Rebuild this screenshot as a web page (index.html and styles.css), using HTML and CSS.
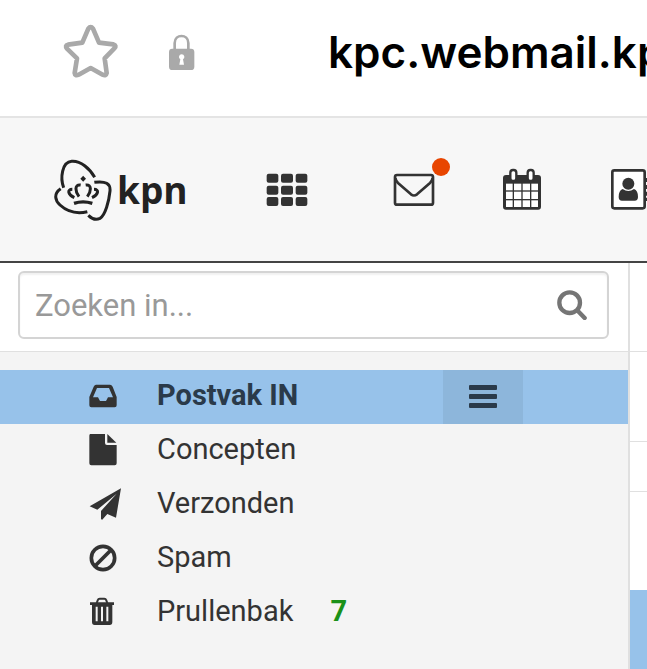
FILE: index.html
```html
<!DOCTYPE html>
<html lang="nl">
<head>
  <meta charset="UTF-8" />
  <meta name="viewport" content="width=device-width, initial-scale=1" />
  <title>KPN Webmail</title>
  <link rel="stylesheet" href="styles.css">
</head>
<body>
  <div class="address-bar">
    <button class="icon-btn star" aria-label="Favoriet">
      <svg width="56" height="56" viewBox="69 42 168 168" fill="none" stroke="#a9a9a9" stroke-width="14" stroke-linejoin="round">
        <path d="M145 56 Q152 47 159 56 L177 98 L220 103 Q231 107 223 115 L194 145 L200 189 Q198 199 188 194 L152 174 L116 194 Q105 199 104 189 L111 145 L81 116 Q74 106 84 104 L127 98 Z" />
      </svg>
    </button>
    <svg class="lock" width="28" height="37" viewBox="384 69 84 111">
      <path d="M404 118 V96 C404 68 445 68 445 96 V118" fill="none" stroke="#a9a9a9" stroke-width="8" />
      <rect x="387" y="113" width="76" height="64" rx="10" fill="#a9a9a9" />
      <path d="M425 130 a8 8 0 0 1 4 15 L432 161 H418 L421 145 a8 8 0 0 1 4 -15 Z" fill="#fff" />
    </svg>
    <span class="url">kpc.webmail.kp</span>
  </div>

  <header class="app-bar">
    <a class="logo" href="#">
      <svg width="60" height="64" viewBox="39 36 180 192" fill="none" stroke="#222" stroke-width="9">
        <path d="M71 125 C60 96 66 48 95 46 C122 44 149 67 164 94" />
        <path d="M163 109 C197 104 212 113 210 135 C207 165 196 208 180 217 C168 223 154 217 145 208" />
        <path d="M62 128 C40 143 45 163 60 177 C82 197 112 204 142 197" />
        <path d="M102 172 Q129 163 157 172" stroke-width="10" />
        <g stroke-width="9">
          <path d="M97 130 C80 130 84 146 103 155" />
          <path d="M162 130 C179 130 175 146 156 155" />
          <path d="M122 117 C102 114 106 138 117 152" />
          <path d="M137 117 C157 114 153 138 142 152" />
        </g>
        <path d="M129.500 89 L138 98 L129.500 107 L121 98 Z" fill="#222" stroke="none" />
      </svg>
      <span class="logo-text">kpn</span>
    </a>
    <button class="icon-btn apps" aria-label="Apps">
      <svg width="42" height="34" viewBox="48 86 126 102" fill="#333">
        <rect x="50" y="88" width="35" height="27" rx="6" />
        <rect x="93" y="88" width="36" height="27" rx="6" />
        <rect x="137" y="88" width="35" height="27" rx="6" />
        <rect x="50" y="124" width="35" height="27" rx="6" />
        <rect x="93" y="124" width="36" height="27" rx="6" />
        <rect x="137" y="124" width="35" height="27" rx="6" />
        <rect x="50" y="158" width="35" height="27" rx="6" />
        <rect x="93" y="158" width="36" height="27" rx="6" />
        <rect x="137" y="158" width="35" height="27" rx="6" />
      </svg>
    </button>
    <button class="icon-btn mail" aria-label="E-mail">
      <svg width="42" height="34" viewBox="430 83 126 102" fill="none" stroke="#333" stroke-width="8" stroke-linejoin="round">
        <rect x="436" y="89" width="114" height="89" rx="6" />
        <path d="M437 98 Q438 106 445 113 L484 147 Q493 154 502 147 L541 113 Q548 106 549 98" />
      </svg>
      <span class="badge"></span>
    </button>
    <button class="icon-btn calendar" aria-label="Agenda">
      <svg width="40" height="43" viewBox="66 70 120 129">
        <rect x="69" y="91" width="114" height="104" rx="9" fill="#333" />
        <g fill="#fff">
          <rect x="78" y="117" width="20" height="20" />
          <rect x="102" y="117" width="22" height="20" />
          <rect x="128" y="117" width="22" height="20" />
          <rect x="154" y="117" width="20" height="20" />
          <rect x="78" y="141" width="20" height="22" />
          <rect x="102" y="141" width="22" height="22" />
          <rect x="128" y="141" width="22" height="22" />
          <rect x="154" y="141" width="20" height="22" />
          <rect x="78" y="167" width="20" height="20" />
          <rect x="102" y="167" width="22" height="20" />
          <rect x="128" y="167" width="22" height="20" />
          <rect x="154" y="167" width="20" height="20" />
        </g>
        <g fill="#fff" stroke="#333" stroke-width="7">
          <rect x="91" y="76" width="18" height="33" rx="8" />
          <rect x="143" y="76" width="18" height="33" rx="8" />
        </g>
      </svg>
    </button>
    <button class="icon-btn contacts" aria-label="Contacten">
      <svg width="43" height="43" viewBox="390 70 129 129">
        <path d="M495 100 h14 v12 h-14 M495 121 h14 v12 h-14 M495 141 h14 v12 h-14 M495 159 h14 v10 h-14" fill="#333" />
        <rect x="397" y="77" width="97" height="114" rx="6" fill="#fff" stroke="#333" stroke-width="8" />
        <circle cx="445" cy="117" r="18" fill="#333" />
        <path d="M428 133 Q445 145 462 133 Q474 137 474 157 Q474 168 464 168 H426 Q416 168 416 157 Q416 137 428 133 Z" fill="#333" />
      </svg>
    </button>
  </header>

  <main class="content">
    <aside class="sidebar">
      <form class="search">
        <div class="search-box">
          <input type="text" placeholder="Zoeken in..." aria-label="Zoeken in" />
          <button class="icon-btn" type="button" aria-label="Zoeken">
            <svg width="30" height="30" viewBox="381 124 90 90" fill="none" stroke="#757575">
              <circle cx="419" cy="162" r="31" stroke-width="13" />
              <path d="M443 186 L464 208" stroke-width="13" stroke-linecap="round" />
            </svg>
          </button>
        </div>
      </form>
      <nav class="folders">
        <div class="folder active">
          <svg width="34" height="34" viewBox="57 27 102 102" fill="#333">
            <path fill-rule="evenodd" d="M78 41 H120 Q125 41 128 47 L140 78 V103 Q140 109 134 109 H64 Q58 109 58 103 V78 L71 47 Q74 41 78 41 Z M81 51 L69 79 H84 L90 90 H108 L114 79 H129 L117 51 Z" />
          </svg>
          <a href="#">Postvak IN</a>
          <button class="menu-btn" aria-label="Menu">
            <svg width="28" height="24" viewBox="0 0 28 24" fill="#2a3a4a">
              <rect y="0" width="28" height="5" rx="1" />
              <rect y="9" width="28" height="5" rx="1" />
              <rect y="18" width="28" height="5" rx="1" />
            </svg>
          </button>
        </div>
        <div class="folder">
          <svg width="34" height="34" viewBox="57 190 102 102" fill="#333">
            <path d="M64 189 H105 V217 Q105 223 111 223 H140 V278 Q140 284 134 284 H64 Q58 284 58 278 V195 Q58 189 64 189 Z" />
            <path d="M112 190 L139 216 H112 Z" />
          </svg>
          <a href="#">Concepten</a>
        </div>
        <div class="folder">
          <svg width="34" height="34" viewBox="57 20 102 102" fill="#333">
            <path d="M153 21 L138 109 L112 98 L96 116 L93 112 V89 L140 37 L82 85 L59 75 Z" />
          </svg>
          <a href="#">Verzonden</a>
        </div>
        <div class="folder">
          <svg width="34" height="34" viewBox="57 182 102 102" fill="none" stroke="#333" stroke-width="11">
            <circle cx="99" cy="230" r="35" />
            <path d="M75 254 L123 206" />
          </svg>
          <a href="#">Spam</a>
        </div>
        <div class="folder">
          <svg width="34" height="34" viewBox="57 346 102 102">
            <path d="M80 367 L84 357 Q85 354 89 354 H103 Q107 354 108 357 L112 367" fill="none" stroke="#333" stroke-width="6" />
            <path d="M60 365 H132 V373 H127 V424 Q127 433 119 433 H74 Q66 433 66 424 V373 H60 Z" fill="#333" />
            <path d="M80 378 V422 M96 378 V422 M112 378 V422" stroke="#f4f4f4" stroke-width="6" />
          </svg>
          <a href="#">Prullenbak</a>
          <span class="count">7</span>
        </div>
      </nav>
    </aside>
    <section class="messages">
      <div class="toolbar"></div>
      <div class="message tall"></div>
      <div class="message short"></div>
      <div class="message last"></div>
      <div class="message selected"></div>
    </section>
  </main>
</body>
</html>
```
FILE: styles.css
```css
* {
  box-sizing: border-box;
}
body {
  margin: 0;
  min-height: 100vh;
  display: flex;
  flex-direction: column;
  overflow: hidden;
  font-family: Roboto, sans-serif;
  color: #333;
  background: #fff;
}
svg {
  display: block;
  flex-shrink: 0;
}
a {
  color: inherit;
  text-decoration: none;
}
.icon-btn {
  flex-shrink: 0;
  padding: 0;
  border: 0;
  background: none;
}

.address-bar {
  display: flex;
  align-items: center;
  height: 118px;
  padding: 0 0 12px 63px;
  border-bottom: 2px solid #e4e4e4;
  overflow: hidden;
}
.lock {
  margin-left: 49px;
}
.url {
  margin-left: 132px;
  font-family: Inter, sans-serif;
  font-size: 44px;
  font-weight: 600;
  line-height: 56px;
  color: #000;
  white-space: nowrap;
}

.app-bar {
  display: flex;
  align-items: center;
  height: 145px;
  padding-left: 53px;
  background: #f7f7f7;
  border-bottom: 2px solid #444;
  overflow: hidden;
}
.logo {
  display: flex;
  align-items: center;
  gap: 4px;
  color: #222;
}
.logo-text {
  font-family: "Open Sans", sans-serif;
  font-size: 37px;
  font-weight: 700;
  line-height: 48px;
}
.apps {
  margin-left: 78px;
}
.mail {
  position: relative;
  margin-left: 85px;
}
.badge {
  position: absolute;
  top: -15px;
  right: -15px;
  width: 18px;
  height: 18px;
  border-radius: 50%;
  background: #e84500;
}
.calendar {
  margin-left: 67px;
}
.contacts {
  margin-left: 68px;
}

.content {
  flex: 1;
  display: flex;
}
.sidebar {
  flex: 1;
  background: #f4f4f4;
  border-right: 2px solid #e0e0e0;
}
.search {
  padding: 8px 19px 12px 18px;
  background: #fff;
  border-bottom: 1px solid #e0e0e0;
}
.search-box {
  display: flex;
  align-items: center;
  height: 68px;
  padding: 0 20px 0 15px;
  border: 2px solid #d4d4d4;
  border-radius: 6px;
  box-shadow: inset 0 2px 2px rgba(0,0,0,0.06);
}
.search-box input {
  flex: 1;
  min-width: 0;
  padding: 0;
  border: 0;
  outline: 0;
  background: none;
  font-family: inherit;
  font-size: 31px;
}
.search-box input::placeholder {
  color: #999;
}

.folders {
  padding-top: 18px;
}
.folder {
  display: flex;
  align-items: center;
  height: 54px;
  padding-left: 89px;
  font-size: 29px;
}
.folder a {
  margin-left: 34px;
  padding-bottom: 4px;
  line-height: 34px;
}
.folder.active {
  background: #97c2ea;
  font-weight: 700;
  color: #2a3a4a;
}
.menu-btn {
  display: flex;
  align-items: center;
  justify-content: center;
  width: 80px;
  height: 54px;
  margin: 0 105px 0 auto;
  padding: 0;
  border: 0;
  background: #8db6db;
}
.count {
  margin-left: 37px;
  padding-bottom: 4px;
  font-weight: 700;
  line-height: 34px;
  color: #1a9118;
}

.messages {
  display: flex;
  flex-direction: column;
  width: 17px;
}
.toolbar,
.message {
  border-bottom: 1px solid #e0e0e0;
}
.toolbar {
  height: 89px;
}
.tall {
  height: 90px;
}
.short {
  height: 50px;
}
.last {
  height: 98px;
  border-bottom: 0;
}
.selected {
  flex: 1;
  border-bottom: 0;
  background: #97c2ea;
}
```
